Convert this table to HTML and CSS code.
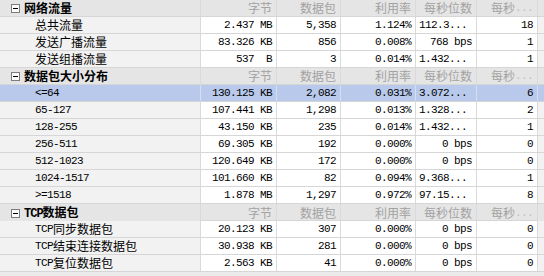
FILE: index.html
```html
<!DOCTYPE html>
<html>
<head>
<meta charset="utf-8">
<link rel="stylesheet" href="styles.css">
</head>
<body>
<div class="list">
  <div class="row group">
    <div class="c lab"><span class="box"></span><b>网络流量</b></div>
    <div class="c n h">字节</div><div class="c n h">数据包</div><div class="c n h">利用率</div><div class="c n h">每秒位数</div><div class="c n h">每秒<span class="dots">...</span></div><div class="c f"></div>
  </div>
  <div class="row">
    <div class="c lab item">总共流量</div>
    <div class="c n m">2.437 MB</div><div class="c n m">5,358</div><div class="c n m">1.124%</div><div class="c l m">112.3...</div><div class="c n m">18</div><div class="c f"></div>
  </div>
  <div class="row">
    <div class="c lab item">发送广播流量</div>
    <div class="c n m">83.326 KB</div><div class="c n m">856</div><div class="c n m">0.008%</div><div class="c n m">768 bps</div><div class="c n m">1</div><div class="c f"></div>
  </div>
  <div class="row">
    <div class="c lab item">发送组播流量</div>
    <div class="c n m">537  B</div><div class="c n m">3</div><div class="c n m">0.014%</div><div class="c l m">1.432...</div><div class="c n m">1</div><div class="c f"></div>
  </div>
  <div class="row group">
    <div class="c lab"><span class="box"></span><b>数据包大小分布</b></div>
    <div class="c n h">字节</div><div class="c n h">数据包</div><div class="c n h">利用率</div><div class="c n h">每秒位数</div><div class="c n h">每秒<span class="dots">...</span></div><div class="c f"></div>
  </div>
  <div class="row sel">
    <div class="c lab item m">&lt;=64</div>
    <div class="c n m">130.125 KB</div><div class="c n m">2,082</div><div class="c n m">0.031%</div><div class="c l m">3.072...</div><div class="c n m">6</div><div class="c f"></div>
  </div>
  <div class="row">
    <div class="c lab item m">65-127</div>
    <div class="c n m">107.441 KB</div><div class="c n m">1,298</div><div class="c n m">0.013%</div><div class="c l m">1.328...</div><div class="c n m">2</div><div class="c f"></div>
  </div>
  <div class="row">
    <div class="c lab item m">128-255</div>
    <div class="c n m">43.150 KB</div><div class="c n m">235</div><div class="c n m">0.014%</div><div class="c l m">1.432...</div><div class="c n m">1</div><div class="c f"></div>
  </div>
  <div class="row">
    <div class="c lab item m">256-511</div>
    <div class="c n m">69.305 KB</div><div class="c n m">192</div><div class="c n m">0.000%</div><div class="c n m">0 bps</div><div class="c n m">0</div><div class="c f"></div>
  </div>
  <div class="row">
    <div class="c lab item m">512-1023</div>
    <div class="c n m">120.649 KB</div><div class="c n m">172</div><div class="c n m">0.000%</div><div class="c n m">0 bps</div><div class="c n m">0</div><div class="c f"></div>
  </div>
  <div class="row">
    <div class="c lab item m">1024-1517</div>
    <div class="c n m">101.660 KB</div><div class="c n m">82</div><div class="c n m">0.094%</div><div class="c l m">9.368...</div><div class="c n m">1</div><div class="c f"></div>
  </div>
  <div class="row">
    <div class="c lab item m">&gt;=1518</div>
    <div class="c n m">1.878 MB</div><div class="c n m">1,297</div><div class="c n m">0.972%</div><div class="c l m">97.15...</div><div class="c n m">8</div><div class="c f"></div>
  </div>
  <div class="row group">
    <div class="c lab"><span class="box"></span><b><span class="mb">TCP</span>数据包</b></div>
    <div class="c n h">字节</div><div class="c n h">数据包</div><div class="c n h">利用率</div><div class="c n h">每秒位数</div><div class="c n h">每秒<span class="dots">...</span></div><div class="c f"></div>
  </div>
  <div class="row">
    <div class="c lab item"><span class="m">TCP</span>同步数据包</div>
    <div class="c n m">20.123 KB</div><div class="c n m">307</div><div class="c n m">0.000%</div><div class="c n m">0 bps</div><div class="c n m">0</div><div class="c f"></div>
  </div>
  <div class="row">
    <div class="c lab item"><span class="m">TCP</span>结束连接数据包</div>
    <div class="c n m">30.938 KB</div><div class="c n m">281</div><div class="c n m">0.000%</div><div class="c n m">0 bps</div><div class="c n m">0</div><div class="c f"></div>
  </div>
  <div class="row">
    <div class="c lab item"><span class="m">TCP</span>复位数据包</div>
    <div class="c n m">2.563 KB</div><div class="c n m">41</div><div class="c n m">0.000%</div><div class="c n m">0 bps</div><div class="c n m">0</div><div class="c f"></div>
  </div>
</div>
</body>
</html>
```

FILE: styles.css
```css
html, body {
  margin: 0;
  padding: 0;
  background: #ebebeb;
}
body {
  width: 544px;
  height: 276px;
  overflow: hidden;
  font-family: "Noto Sans CJK SC", sans-serif;
  font-size: 12px;
  color: #000;
}
.list {
  display: flex;
  flex-direction: column;
}
.row {
  display: grid;
  grid-template-columns: 201px 76px 64px 75px 61px 61px 1fr;
  height: 17px;
  box-sizing: border-box;
  border-bottom: 1px solid #d6d6d6;
  background: #fff;
}
.c {
  box-sizing: border-box;
  border-right: 1px solid #dadada;
  display: flex;
  align-items: center;
  white-space: pre;
  overflow: hidden;
  line-height: 16px;
}
.n {
  justify-content: flex-end;
  padding-right: 4px;
}
.l {
  justify-content: flex-start;
  padding-left: 3px;
}
.f {
  border-right: none;
  background: #f2f2f2;
}
.lab {
  background: #f2f2f2;
  overflow: visible;
}
.item {
  padding-left: 35px;
}
.m {
  font-family: "Liberation Mono", monospace;
  font-size: 11px;
  letter-spacing: -0.6px;
}
.group {
  background: #e5e5e5;
}
.group .lab, .group .f {
  background: #e5e5e5;
  padding-left: 11px;
}
.group b {
  font-weight: 700;
  margin-left: 4px;
  line-height: 16px;
}
.mb {
  font-family: "Liberation Mono", monospace;
  font-size: 12px;
  letter-spacing: -1px;
  font-weight: 700;
  line-height: 16px;
}
.h {
  color: #a2a2a2;
}
.dots {
  color: #bdbdbd;
  font-family: "Liberation Mono", monospace;
  font-size: 11px;
  letter-spacing: -0.6px;
}
.box {
  width: 9px;
  height: 9px;
  box-sizing: border-box;
  border: 1px solid #7c7c7c;
  background: #fbfbfb;
  position: relative;
  flex: none;
}
.box::after {
  content: "";
  position: absolute;
  left: 1px;
  top: 3px;
  width: 5px;
  height: 1px;
  background: #000;
}
.sel, .sel .lab, .sel .f {
  background: #b8c9eb;
}
.sel .c {
  border-right-color: #d6dff2;
}
```
